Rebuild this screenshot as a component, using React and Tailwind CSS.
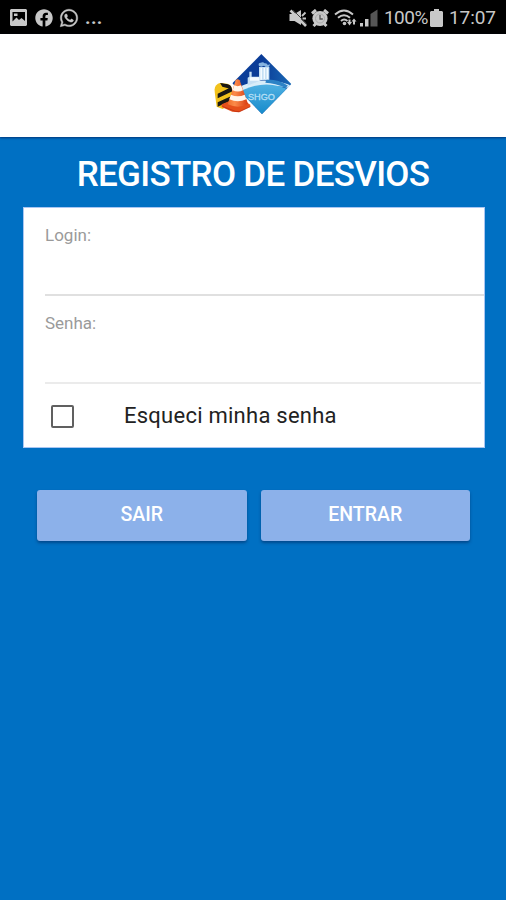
import { useState } from "react";
import { FaFacebook, FaWhatsapp } from "react-icons/fa";

function StatusBar() {
  return (
    <div className="flex h-[34px] items-center bg-black pt-px pl-[10px] text-[#c8c8c8]">
      {/* notifications */}
      <svg className="h-[17px] w-[17px]" viewBox="0 0 17 17">
        <path
          fill="currentColor"
          fillRule="evenodd"
          d="M1 0h15l1 1v15l-1 1H1l-1-1V1zM2.500 3v9.500l4-4 2.500 2.500 2.500-2 3.500 3V3zM4 4.500h3.500v2.500H4z"
        />
      </svg>
      <FaFacebook className="ml-2 h-[18px] w-[18px]" />
      <FaWhatsapp className="ml-[6px] h-[20px] w-[20px]" stroke="currentColor" strokeWidth="12" />
      <span className="ml-[6px] text-[19px] leading-none font-bold tracking-[0.4px]">...</span>

      {/* system icons */}
      <div className="ml-auto flex items-center pr-[10px]">
        <svg className="h-[18px] w-[18px]" viewBox="0 0 18 18">
          <path fill="currentColor" d="M0.500 5h5L12 1v15l-6.500-4h-5z" />
          <path stroke="currentColor" strokeWidth="1.800" d="M13 7l3.500-3.500M13.500 9.500H17" />
          <path stroke="#333" strokeWidth="0.900" d="M4 1l13.500 13.500" />
          <path stroke="currentColor" strokeWidth="2.600" d="M1.500 1.500l15.500 15.500" />
        </svg>
        <svg className="ml-[4px] h-[18px] w-[18px]" viewBox="0 0 18 18">
          <circle cx="9" cy="9.500" r="7.600" fill="currentColor" />
          <path stroke="currentColor" strokeWidth="3" d="M1 4.500L5 1M17 4.500L13 1M2.500 17l3-3M15.500 17l-3-3" />
          <circle cx="9" cy="9.500" r="4.500" fill="none" stroke="#a5a5a5" strokeWidth="0.900" />
          <path fill="none" stroke="#555" strokeWidth="1.300" d="M9 6v4h2.800" />
        </svg>
        <svg className="ml-[5px] h-[18px] w-[23px]" viewBox="0 0 23 18">
          <g fill="none" stroke="currentColor" strokeWidth="1.900">
            <path d="M1 5.500Q10 -2.500 19 5.500M4 8.800Q10 3.500 16 8.800M7 12Q10 9 13.500 12" />
          </g>
          <circle cx="10.500" cy="14.500" r="1.800" fill="currentColor" />
          <path fill="currentColor" d="M13 13h1.500v-2.500h2V13H18l-2.500 3.500zM17.500 12.500L20 9.500l2.500 3H21v3h-2v-3z" />
        </svg>
        <svg className="ml-[3px] h-[18px] w-[18px]" viewBox="0 0 18 18">
          <path fill="currentColor" d="M0 14h3v3.500H0zM5 10h3.500v7.500H5z" />
          <path fill="#555" d="M10.500 5L17.500 0.500v17h-7z" />
        </svg>
        <span className="ml-[6px] w-[45px] text-[19px] leading-none tracking-[-0.5px]">100%</span>
        <svg className="ml-px h-[18px] w-[13px]" viewBox="0 0 13 18">
          <path fill="currentColor" d="M4 0h5v2h3l1 1v14l-1 1H1l-1-1V3l1-1h3z" />
        </svg>
        <span className="ml-[6px] text-[19px] leading-none tracking-[-0.05px]">17:07</span>
      </div>
    </div>
  );
}

function Logo() {
  return (
    <svg className="h-[75px] w-[100px]" viewBox="0 0 300 225">
      <defs>
        <linearGradient id="sky" x1="0" y1="0" x2="1" y2="0">
          <stop offset="0" stopColor="#0a3f9c" />
          <stop offset="0.5" stopColor="#0a3b96" />
          <stop offset="1" stopColor="#1a6cb8" />
        </linearGradient>
        <linearGradient id="ground" x1="0" y1="0" x2="0" y2="1">
          <stop offset="0" stopColor="#4fb0e2" />
          <stop offset="1" stopColor="#1489ca" />
        </linearGradient>
        <linearGradient id="cone" x1="0" y1="0" x2="1" y2="0">
          <stop offset="0" stopColor="#f0702c" />
          <stop offset="0.35" stopColor="#fb8b4a" />
          <stop offset="1" stopColor="#d83a10" />
        </linearGradient>
        <clipPath id="diamond">
          <path d="M175 27L265 117 177 207 88 115z" />
        </clipPath>
        <clipPath id="barrier">
          <path d="M34 134q3-17 17-20l22 2q12 3 14 17v42l-28 17-18-7z" />
        </clipPath>
      </defs>
      <g clipPath="url(#diamond)">
        <path fill="url(#sky)" d="M80 20h190v190H80z" />
        <path fill="#d9edf9" d="M80 142Q150 98 205 108 240 110 270 124v8Q190 104 80 160z" />
        <path fill="#2c82c6" d="M190 104q35-2 65 18l-8 6q-30-14-60-15z" />
        <path fill="url(#ground)" d="M80 160Q175 88 270 140v70H80z" />
        {/* plant on the horizon */}
        <path fill="#c6e0f4" d="M134 122V98l5-3V80h7v15h22V66h31v38l-25 2-30 12z" />
        <path fill="#f4faff" d="M141 97h28v10h-28zM172 69h5v35h-5zM182 69h4v33h-4zM191 69h4v33h-4z" />
        <path fill="#86b4e0" d="M168 63q-4-9 5-10 7-4 12 2 8-1 9 5l8-2-5 8h-9l-5-4-8 3z" />
      </g>
      <text
        x="135"
        y="164"
        textLength="81"
        lengthAdjust="spacingAndGlyphs"
        className="fill-[#b5dff5] stroke-[#b5dff5] font-['Liberation_Sans',sans-serif] text-[29px]"
      >
        SHGO
      </text>
      {/* striped barrier */}
      <g clipPath="url(#barrier)">
        <path fill="#f2c21c" d="M30 110h60v84H30z" />
        <path fill="#1a1813" d="M50 112l38 9v12l-30-8zM44 146l44-21v14l-44 21zM44 172l44-20v13l-44 20z" />
      </g>
      {/* traffic cone */}
      <path fill="#e5501b" d="M56 178l22-9 46-2 18 12v6l-34 17-20-2-32-14z" />
      <path fill="url(#cone)" d="M74 178l24-72q6-7 12 0l25 70q-26 17-61 2z" />
      <path fill="#fff5ea" d="M94 121q10 5 20 0l6 15q-15 7-31 0zM84 149q20 9 41 0l5 14q-25 12-51 0z" />
      <path fill="none" stroke="#b92b12" strokeWidth="2" d="M58 184l39 15 12 1 33-15" />
    </svg>
  );
}

function Field({ label, type, name }) {
  return (
    <label className="flex h-full flex-col">
      <span className="text-[17px] leading-5 text-[#9a9a9a]">{label}</span>
      <input className="w-full flex-1 bg-transparent text-lg outline-none" type={type} name={name} />
    </label>
  );
}

function Button({ children }) {
  return (
    <button className="h-[51px] flex-1 rounded-[3px] bg-[#8cb1ea] pb-[2px] text-[19.5px] font-medium text-white shadow-[0_2px_3px_rgba(0,35,90,0.5)]">
      {children}
    </button>
  );
}

export default function App() {
  const [forgot, setForgot] = useState(false);

  return (
    <div className="flex h-[900px] w-[506px] flex-col overflow-hidden bg-[#0070c3] font-[Roboto,sans-serif]">
      <StatusBar />
      <header className="flex h-[103px] shrink-0 justify-center bg-white pt-[11px] shadow-[0_1px_2px_rgba(0,30,90,0.7)]">
        <Logo />
      </header>

      <h1 className="mt-[18px] text-center text-[35px] leading-[40px] font-medium tracking-[-0.7px] whitespace-nowrap text-white">
        REGISTRO DE DESVIOS
      </h1>

      <form className="mt-[12px] ml-[23px] h-[241px] w-[462px] shrink-0 border border-[#a9c6f2] bg-white">
        <div className="ml-[21px] h-[88px] border-b-2 border-[#e0e0e0] pt-[17px]">
          <Field label="Login:" type="text" name="login" />
        </div>
        <div className="mr-[3px] ml-[21px] h-[88px] border-b-2 border-[#ebebeb] pt-[17px]">
          <Field label="Senha:" type="password" name="senha" />
        </div>
        <label className="flex h-[64px] items-center pl-[27px]">
          <input
            type="checkbox"
            checked={forgot}
            onChange={() => setForgot(!forgot)}
            className="h-[23px] w-[23px] appearance-none rounded-[2px] border-2 border-[#606060] checked:bg-[#606060]"
          />
          <span className="ml-[50px] text-[22px] leading-none tracking-[0.25px] text-[#222]">Esqueci minha senha</span>
        </label>
      </form>

      <div className="mt-[42px] flex gap-[14px] pr-[36px] pl-[37px]">
        <Button>SAIR</Button>
        <Button>ENTRAR</Button>
      </div>
    </div>
  );
}
